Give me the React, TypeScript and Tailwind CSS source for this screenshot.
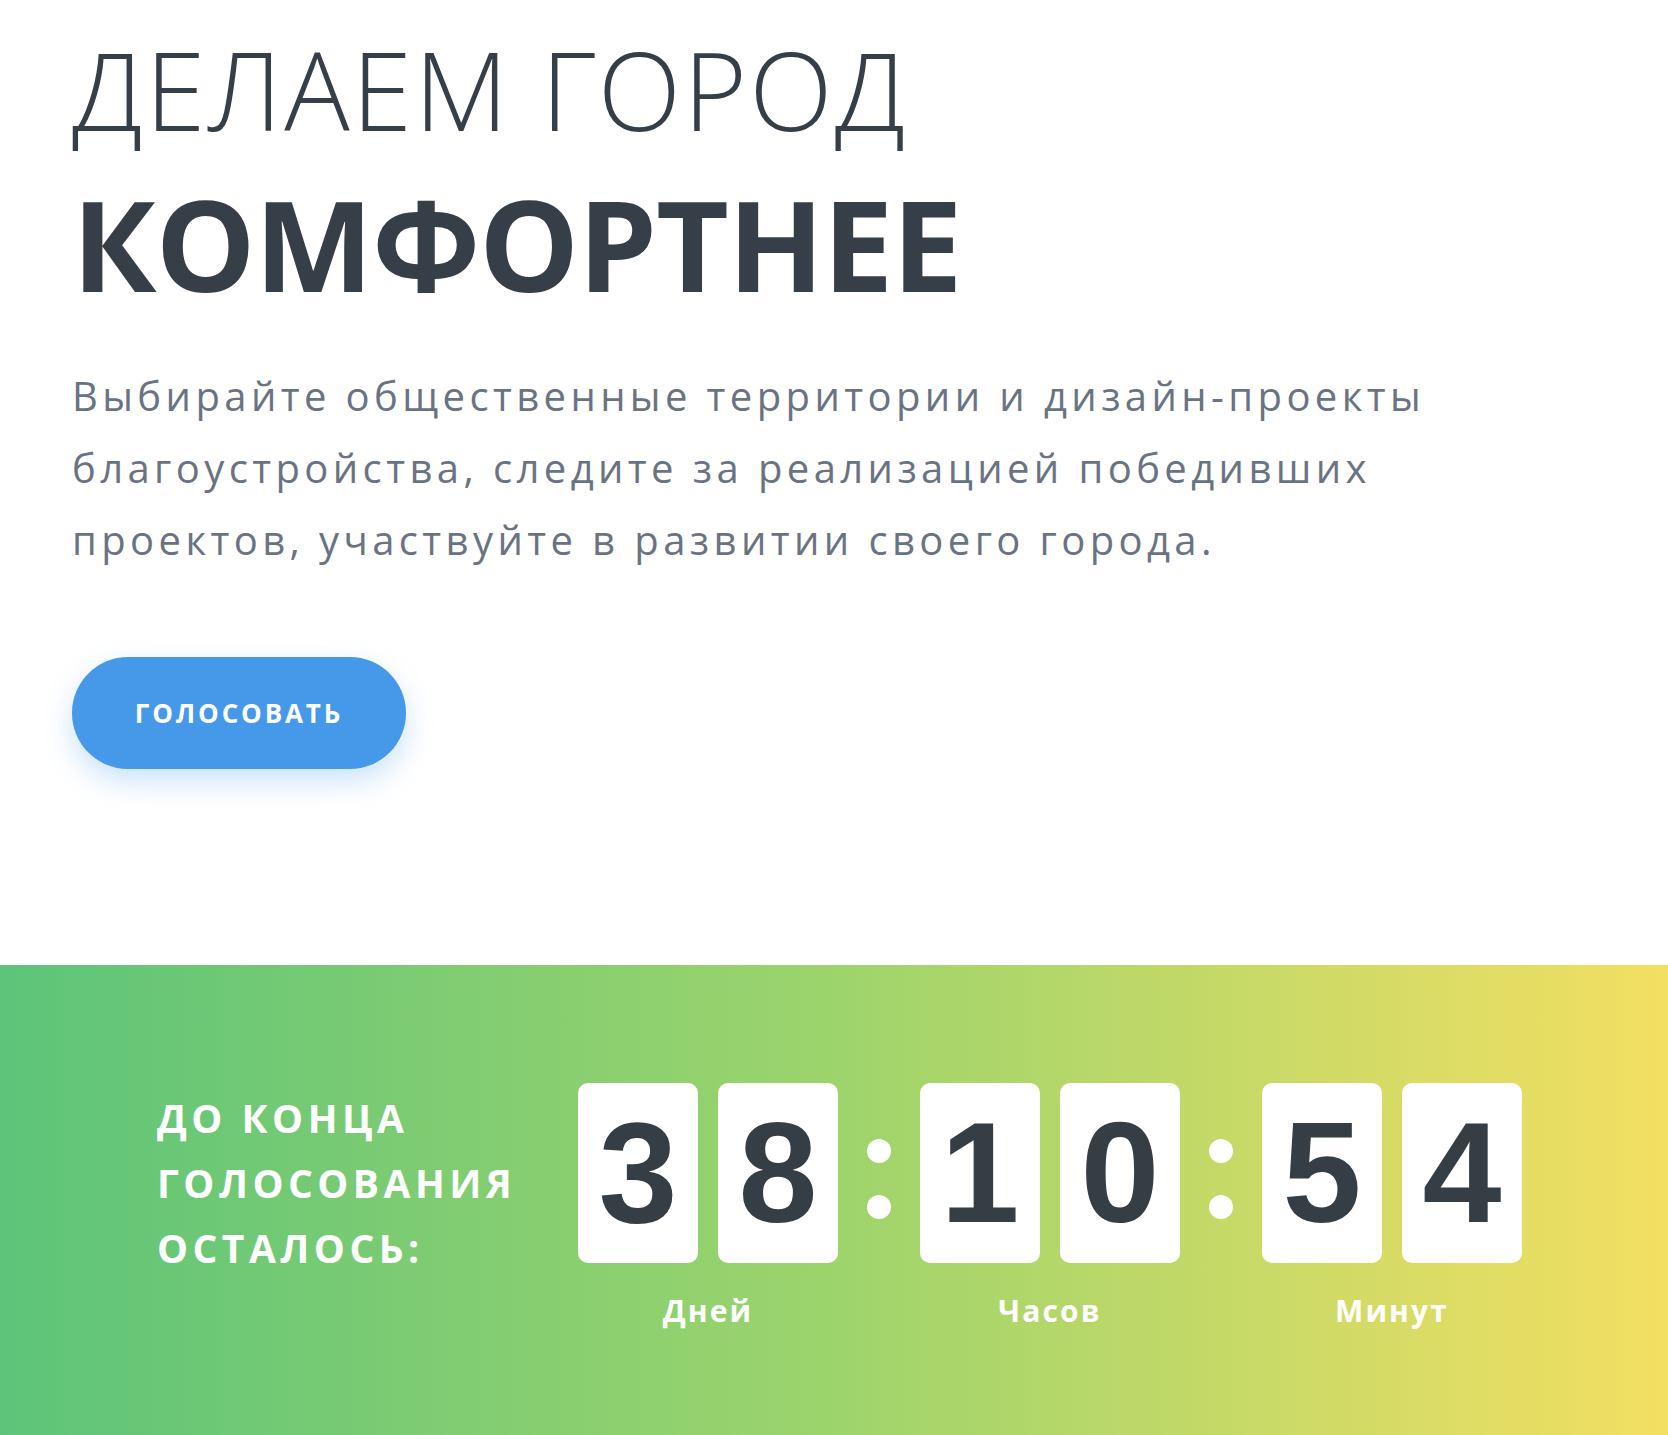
import React from 'react';

const units = [
  { digits: ['3', '8'], label: 'Дней' },
  { digits: ['1', '0'], label: 'Часов' },
  { digits: ['5', '4'], label: 'Минут' },
];

const Colon = () => (
  <div className="flex w-[82px] h-[180px] flex-col items-center justify-center gap-[32px] pt-[12px]">
    <span className="block h-[24px] w-[24px] rounded-full bg-white" />
    <span className="block h-[24px] w-[24px] rounded-full bg-white" />
  </div>
);

const Unit = ({ digits, label }: { digits: string[]; label: string }) => (
  <div className="flex flex-col items-center">
    <div className="flex gap-[20px]">
      {digits.map((d, i) => (
        <div
          key={i}
          className="flex h-[180px] w-[120px] items-center justify-center rounded-[10px] bg-white font-['Liberation_Sans',Arial,sans-serif] text-[142px] font-bold leading-none text-[#353d45]"
        >
          {d}
        </div>
      ))}
    </div>
    <div className="mt-[28px] font-['Open_Sans',sans-serif] text-[30px] font-bold leading-[40px] tracking-[0.07em] text-white">
      {label}
    </div>
  </div>
);

export default function App() {
  return (
    <div className="min-h-[1435px] w-full bg-white font-['Open_Sans',sans-serif]">
      {/* Hero */}
      <section className="h-[965px] pl-[72px] pt-[34px]">
        <h1 className="text-[#363f48]">
          <span className="block text-[109px] font-light leading-[109px] tracking-[0.02em]">
            ДЕЛАЕМ ГОРОД
          </span>
          <span className="mt-[37px] block text-[126px] font-bold leading-[126px] tracking-[-0.01em]">
            КОМФОРТНЕЕ
          </span>
        </h1>
        <p className="mt-[54px] text-[40px] font-medium leading-[72px] tracking-[0.11em] text-[#6a7382]">
          Выбирайте общественные территории и дизайн-проекты
          <br />
          благоустройства, следите за реализацией победивших
          <br />
          проектов, участвуйте в развитии своего города.
        </p>
        <button className="mt-[81px] flex h-[112px] w-[334px] items-center justify-center rounded-full bg-[#4698e8] text-[26px] font-bold tracking-[0.11em] text-white shadow-[0_12px_28px_rgba(70,152,232,0.28)]">
          ГОЛОСОВАТЬ
        </button>
      </section>

      {/* Countdown */}
      <section className="flex h-[470px] items-start bg-[linear-gradient(90deg,#5dc479_0%,#9dd46c_50%,#f3df62_100%)] pl-[157px] pt-[118px]">
        <div className="w-[421px] pt-[2px] text-[39px] font-bold leading-[65px] tracking-[0.115em] text-white">
          ДО КОНЦА
          <br />
          ГОЛОСОВАНИЯ
          <br />
          ОСТАЛОСЬ:
        </div>
        <div className="flex items-start">
          <Unit {...units[0]} />
          <Colon />
          <Unit {...units[1]} />
          <Colon />
          <Unit {...units[2]} />
        </div>
      </section>
    </div>
  );
}
